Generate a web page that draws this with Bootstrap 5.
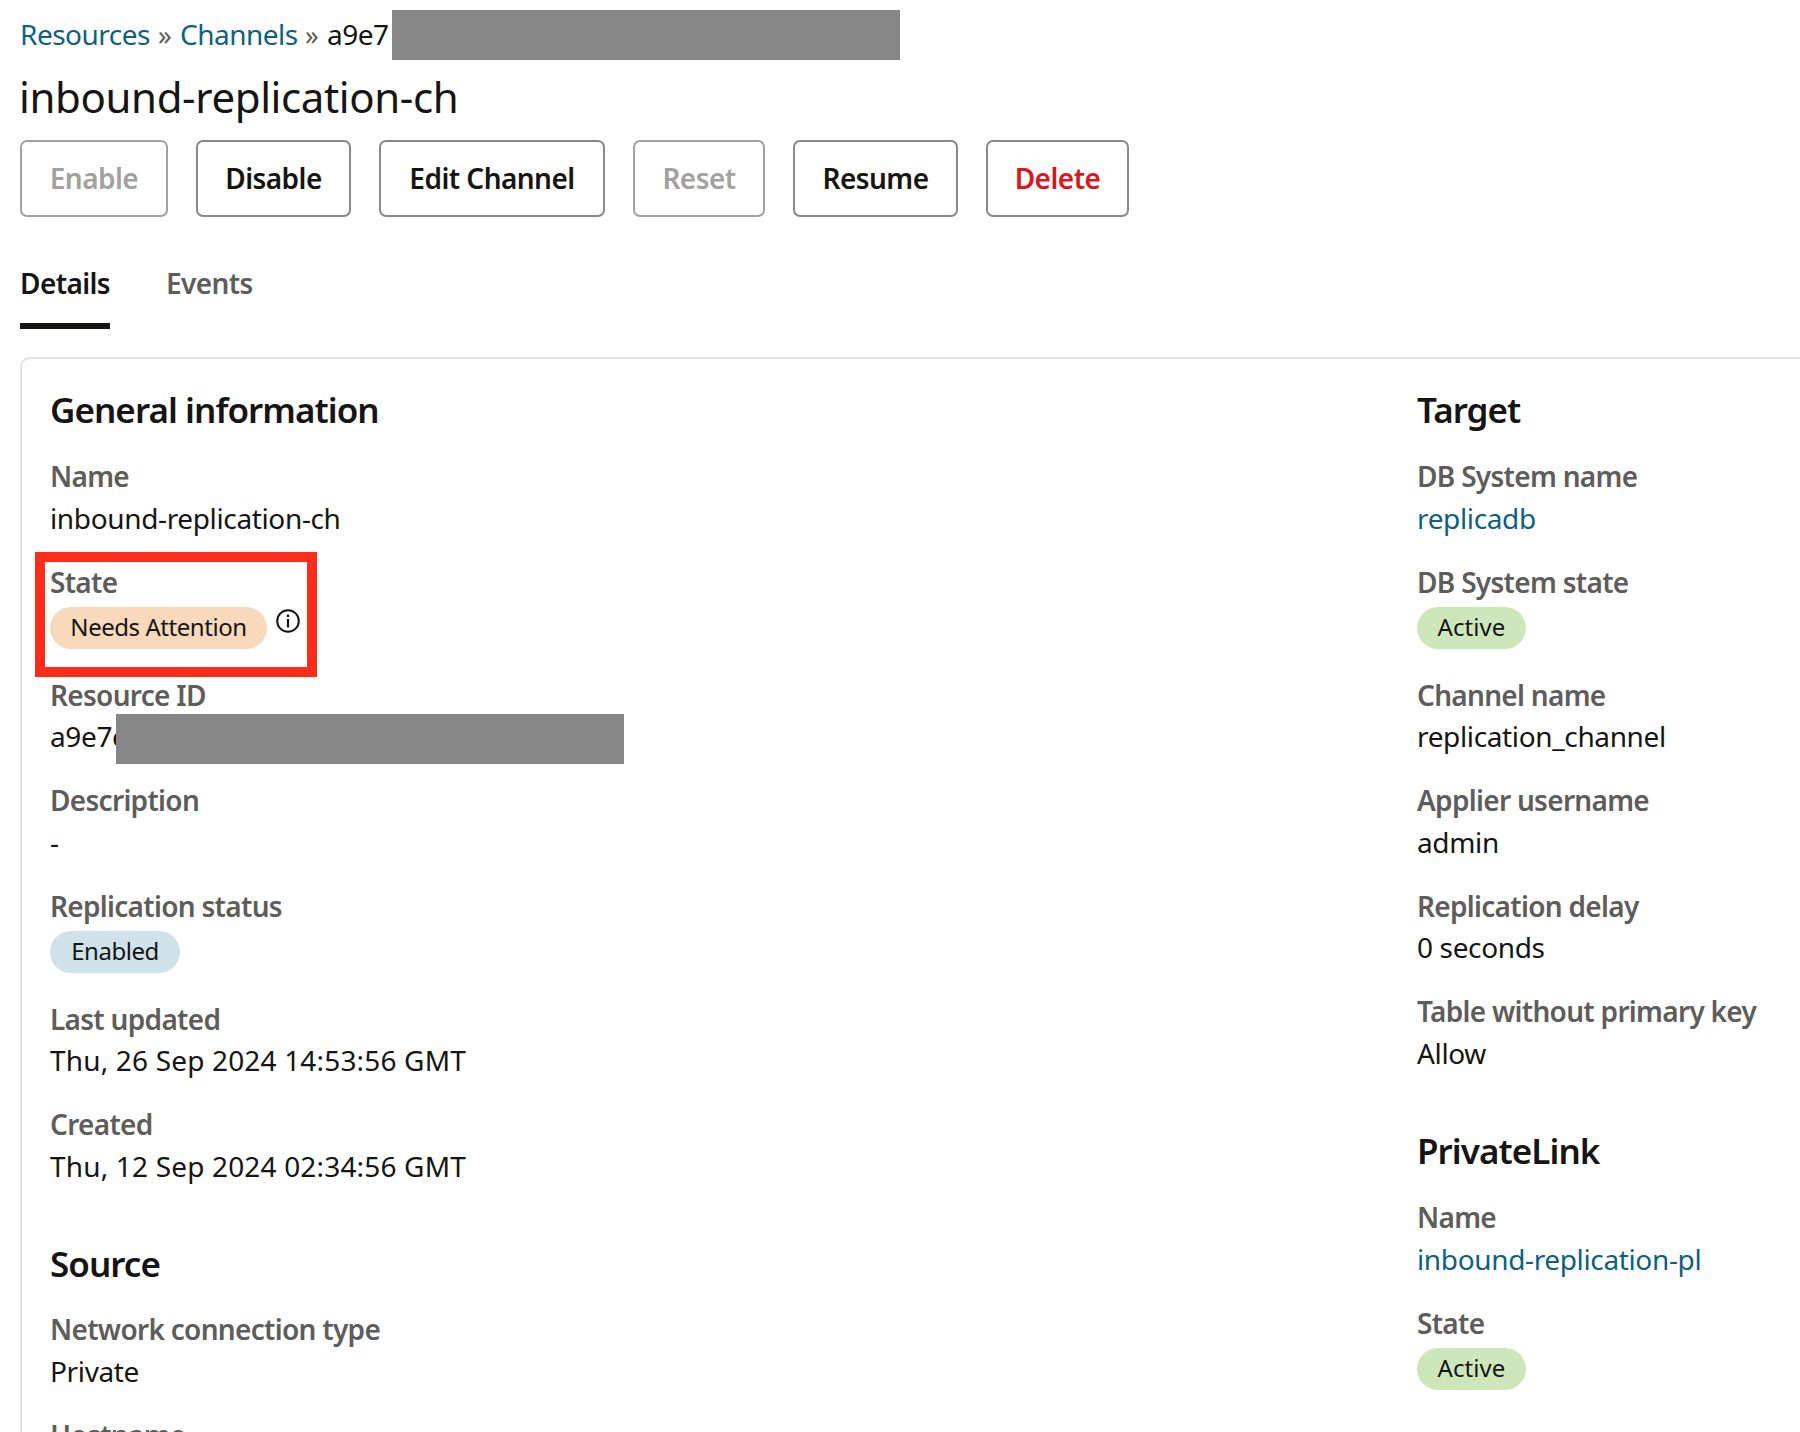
<!DOCTYPE html>
<html lang="en">
<head>
<meta charset="utf-8">
<meta name="viewport" content="width=device-width, initial-scale=1">
<title>inbound-replication-ch</title>
<link href="https://cdn.jsdelivr.net/npm/bootstrap@5.3.0/dist/css/bootstrap.min.css" rel="stylesheet">
<script src="https://cdn.jsdelivr.net/npm/bootstrap@5.3.0/dist/js/bootstrap.bundle.min.js"></script>
<style>
  :root { --ink: #161513; --muted: #5e5d5b; --link: #0f5f80; }
  html, body { height: 1432px; overflow: hidden; }
  body { font-family: "Noto Sans", sans-serif; font-size: 28px; letter-spacing: -.36px; color: var(--ink); background: #fff; }
  a, a:hover { color: var(--link); text-decoration: none; }
  .page { height: 1432px; padding: 10px 0 0 20px; overflow: hidden; }
  .trail { height: 50px; line-height: 49px; letter-spacing: -.5px; }
  .trail .sep { width: 31px; text-align: center; color: var(--muted); font-size: 27px; }
  .trail .crumb-res { width: 129px; }
  .trail .crumb-ch { width: 116px; }
  .trail .crumb-id { width: 65px; }
  .redacted { width: 508px; height: 50px; background: #868686; letter-spacing: normal; }
  .page-title { font-size: 42px; font-weight: 400; line-height: 56px; letter-spacing: -.38px; margin: 8.5px 0 15.5px -1px; }
  .actions { gap: 28px; height: 77px; }
  .actions .btn { border: 2px solid #898886; border-radius: 7px; padding: 0; font-size: 28px; font-weight: 600; line-height: 69px; letter-spacing: -.55px; color: var(--ink); height: 77px; }
  .actions .btn:disabled { color: #a2a1a0; border-color: #a2a1a0; opacity: 1; }
  .actions .btn.danger { color: #dc1620; }
  .w-enable { width: 148px; } .w-disable { width: 155px; } .w-edit { width: 226px; }
  .w-reset { width: 132px; } .w-resume { width: 165px; } .w-delete { width: 143px; }
  .tabs { gap: 56px; margin-top: 35px; }
  .tabs .nav-link { padding: 0; height: 77px; line-height: 62px; font-weight: 600; letter-spacing: -.6px; color: var(--muted); border-bottom: 6px solid transparent; }
  .tabs .nav-link.active { width: 90px; color: var(--ink); border-color: var(--ink); white-space: nowrap; }
  .panel { border: 2px solid #e3e2e2; border-width: 2px 0 0 2px; border-top-left-radius: 10px; margin-top: 28px; padding: 26px 0 0 28px; height: 1075px; }
  .col-main { width: 1367px; flex: none; }
  .group-title { font-size: 35px; font-weight: 600; line-height: 49px; letter-spacing: -.95px; margin: 0 0 22.4px; }
  .group + .group { padding-top: 29px; }
  .col-main .group + .group .group-title { margin-bottom: 21.6px; }
  .field { margin-bottom: 22.5px; }
  .field-label { font-weight: 600; line-height: 41.5px; letter-spacing: -.7px; color: var(--muted); white-space: nowrap; }
  .field-value { line-height: 40.5px; height: 41.5px; white-space: nowrap; }
  .field-value.date { letter-spacing: .17px; }
  .field-status { height: 49px; padding-top: 4px; }
  .pill { height: 42px; border-radius: 21px; font-size: 24px; line-height: 40px; text-align: center; letter-spacing: -.45px; }
  .pill-warn { width: 217px; background: #f8d9bc; }
  .pill-info { width: 130px; background: #cfe2ea; }
  .pill-ok { width: 109px; background: #cee7ba; letter-spacing: .1px; }
  .info-icon { margin: 2px 0 0 9px; }
  .callout { position: absolute; left: -15px; top: -10px; width: 282px; height: 125px; border: 10px solid #fc2d1b; }
  .id-start { width: 66px; overflow: hidden; }
  .id-row .redacted { margin-top: -2px; flex: none; }
</style>
</head>
<body>
<div class="page">
  <nav class="trail d-flex">
    <a href="#" class="crumb-res">Resources</a><span class="sep">»</span>
    <a href="#" class="crumb-ch">Channels</a><span class="sep">»</span>
    <span class="crumb-id">a9e7</span><span class="redacted"></span>
  </nav>
  <h1 class="page-title">inbound-replication-ch</h1>
  <div class="actions d-flex">
    <button class="btn w-enable" disabled>Enable</button>
    <button class="btn w-disable">Disable</button>
    <button class="btn w-edit">Edit Channel</button>
    <button class="btn w-reset" disabled>Reset</button>
    <button class="btn w-resume">Resume</button>
    <button class="btn danger w-delete">Delete</button>
  </div>
  <div class="tabs nav">
    <a class="nav-link active" href="#">Details</a>
    <a class="nav-link" href="#">Events</a>
  </div>
  <main class="panel d-flex">
    <div class="col-main">
      <section class="group">
        <h2 class="group-title">General information</h2>
        <div class="field"><div class="field-label">Name</div><div class="field-value">inbound-replication-ch</div></div>
        <div class="field position-relative">
          <div class="field-label">State</div>
          <div class="field-status d-flex">
            <div class="pill pill-warn">Needs Attention</div>
            <svg class="info-icon" width="24" height="24" viewBox="0 0 24 24" fill="none" stroke="#161513"><circle cx="12" cy="12" r="10.8" stroke-width="2"/><path d="M12 10v8.5M12 5.6v2.4" stroke-width="2.2"/></svg>
          </div>
          <div class="callout"></div>
        </div>
        <div class="field"><div class="field-label">Resource ID</div><div class="field-value id-row d-flex"><span class="id-start">a9e7c</span><span class="redacted"></span></div></div>
        <div class="field"><div class="field-label">Description</div><div class="field-value">-</div></div>
        <div class="field"><div class="field-label">Replication status</div><div class="field-status d-flex"><div class="pill pill-info">Enabled</div></div></div>
        <div class="field"><div class="field-label">Last updated</div><div class="field-value date">Thu, 26 Sep 2024 14:53:56 GMT</div></div>
        <div class="field"><div class="field-label">Created</div><div class="field-value date">Thu, 12 Sep 2024 02:34:56 GMT</div></div>
      </section>
      <section class="group">
        <h2 class="group-title">Source</h2>
        <div class="field"><div class="field-label">Network connection type</div><div class="field-value">Private</div></div>
        <div class="field mb-0"><div class="field-label">Hostname</div></div>
      </section>
    </div>
    <div>
      <section class="group">
        <h2 class="group-title">Target</h2>
        <div class="field"><div class="field-label">DB System name</div><div class="field-value"><a href="#">replicadb</a></div></div>
        <div class="field"><div class="field-label">DB System state</div><div class="field-status d-flex"><div class="pill pill-ok">Active</div></div></div>
        <div class="field"><div class="field-label">Channel name</div><div class="field-value">replication_channel</div></div>
        <div class="field"><div class="field-label">Applier username</div><div class="field-value">admin</div></div>
        <div class="field"><div class="field-label">Replication delay</div><div class="field-value">0 seconds</div></div>
        <div class="field"><div class="field-label">Table without primary key</div><div class="field-value">Allow</div></div>
      </section>
      <section class="group">
        <h2 class="group-title">PrivateLink</h2>
        <div class="field"><div class="field-label">Name</div><div class="field-value"><a href="#">inbound-replication-pl</a></div></div>
        <div class="field"><div class="field-label">State</div><div class="field-status d-flex"><div class="pill pill-ok">Active</div></div></div>
      </section>
    </div>
  </main>
</div>
</body>
</html>
